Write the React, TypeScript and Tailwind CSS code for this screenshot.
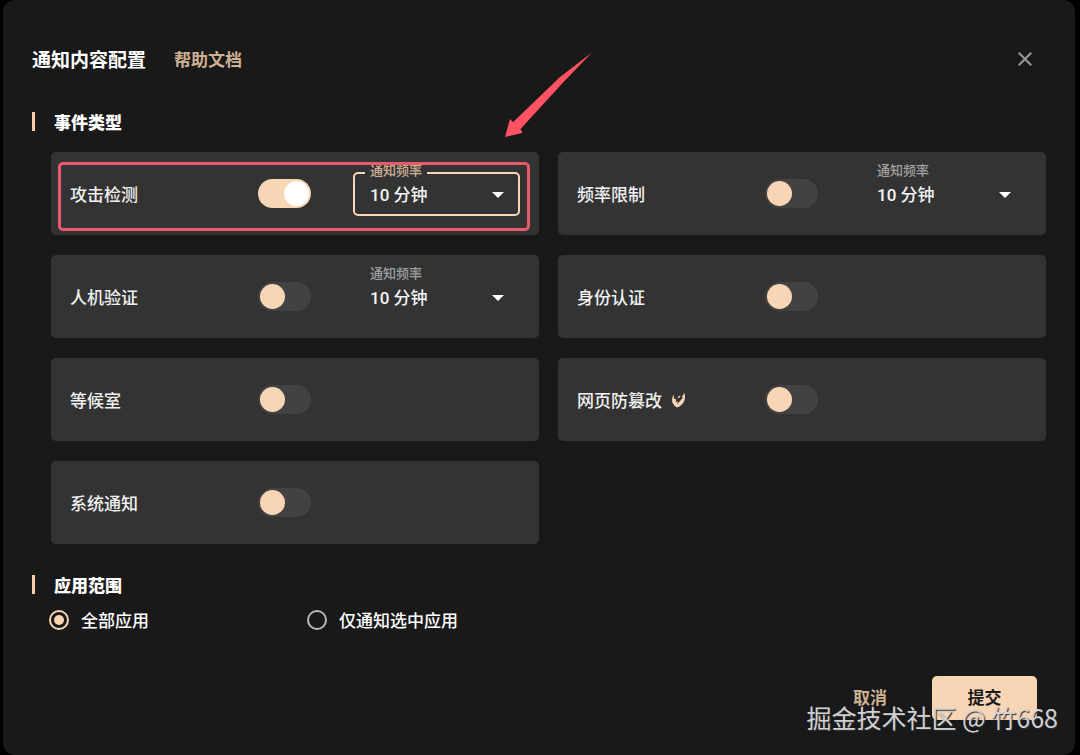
import { useState } from "react";
import { MdClose } from "react-icons/md";

type EventItem = {
  id: string;
  name: string;
  enabled: boolean;
  frequency?: boolean;
  premium?: boolean;
};

const EVENTS: EventItem[] = [
  { id: "attack", name: "攻击检测", enabled: true, frequency: true },
  { id: "rate", name: "频率限制", enabled: false, frequency: true },
  { id: "captcha", name: "人机验证", enabled: false, frequency: true },
  { id: "auth", name: "身份认证", enabled: false },
  { id: "waiting", name: "等候室", enabled: false },
  { id: "tamper", name: "网页防篡改", enabled: false, premium: true },
  { id: "system", name: "系统通知", enabled: false },
];

function PremiumIcon() {
  return (
    <svg className="h-4 w-4" viewBox="0 0 16 16" fill="#f8d5b4" aria-hidden="true">
      <path d="M3 2.4 C.8 4.6 .6 9 2 11.6 C2.8 13.4 4.4 15 6.2 15.4 C9.2 14.8 12 12 13.2 9 C14.4 6 14.4 3 12.8 .6 C12.8 2.4 12 3.8 10.8 4.8 L12 5.6 L6 12.6 L7 9.4 L4.6 10 L5.2 7.2 L3.6 7 C2.8 5.8 2.6 4.2 3 2.4 Z" />
      <path d="M6.4 5.4 L7.8 4.2 L9.6 3.6 L8.8 5.2 L7 6.2 Z" />
    </svg>
  );
}

function Switch({ id, defaultChecked }: { id: string; defaultChecked: boolean }) {
  return (
    <span className="relative flex shrink-0">
      <input id={id} type="checkbox" role="switch" defaultChecked={defaultChecked} className="peer h-[29px] w-[53px] cursor-pointer appearance-none rounded-full bg-[#424242] checked:bg-[#f8d5b4]" />
      <span className="pointer-events-none absolute top-[2px] left-[2px] h-[25px] w-[25px] rounded-full bg-[#f8d5b4] peer-checked:left-[26px] peer-checked:bg-white" />
    </span>
  );
}

function FrequencySelect({ id, active }: { id: string; active: boolean }) {
  return (
    <div className="relative ml-[42px] flex-1">
      <label htmlFor={id} className={`absolute -top-[10px] left-3 bg-[#333333] px-[5px] text-[13px] leading-4 font-medium ${active ? "text-[#cfb296]" : "text-[#a0a0a0]"}`}>
        通知频率
      </label>
      <select id={id} className={`block h-11 w-full appearance-none rounded-[5px] border-2 pt-1 pl-[15px] font-[Roboto,'Noto_Sans_CJK_SC',sans-serif] text-[17px] font-medium text-[#f4f4f4] outline-none ${active ? "border-[#f8d5b4]" : "border-transparent"}`}>
        <option>10 分钟</option>
      </select>
      <svg className="pointer-events-none absolute top-5 right-4 h-[6px] w-3" viewBox="0 0 12 6" fill="#fff" aria-hidden="true">
        <path d="M0 0h12L6 6z" />
      </svg>
    </div>
  );
}

function Annotation() {
  return (
    <>
      <div className="pointer-events-none absolute top-[10px] right-[9px] bottom-1 left-[7px] rounded-[5px] border-3 border-[#ea586b]" />
      <svg className="pointer-events-none absolute -top-[100px] left-[453px] h-[86px] w-[90px]" viewBox="0 0 90 86" fill="#ff5364" aria-hidden="true">
        <path d="M1 85 L6 67 L9 70.3 L56 25 L88 .5 L60 29.5 L16.5 77 L18.5 81 Z" />
      </svg>
    </>
  );
}

function EventCard({ item }: { item: EventItem }) {
  return (
    <div className="relative flex min-h-[83px] items-center rounded-[5px] bg-[#333333] px-[19px]">
      <label htmlFor={item.id} className="flex w-[188px] shrink-0 items-center gap-[9px] text-[17px] font-medium text-[#f0f0f0]">
        {item.name}
        {item.premium && <PremiumIcon />}
      </label>
      <Switch id={item.id} defaultChecked={item.enabled} />
      {item.frequency && <FrequencySelect id={`${item.id}-frequency`} active={item.enabled} />}
      {item.id === "attack" && <Annotation />}
    </div>
  );
}

function SectionTitle({ children }: { children: string }) {
  return (
    <h2 className="flex h-[19px] items-center gap-[19px] text-[17px] font-black text-white">
      <span className="h-[19px] w-[3px] bg-[#f8cda8]" />
      {children}
    </h2>
  );
}

export default function App() {
  const [scope, setScope] = useState("all");
  const scopes = [
    { value: "all", label: "全部应用" },
    { value: "selected", label: "仅通知选中应用" },
  ];

  return (
    <div className="flex min-h-screen bg-black pr-[5px] pl-[3px] font-['Noto_Sans_CJK_SC',sans-serif]">
      <form role="dialog" aria-labelledby="dialog-title" onSubmit={(e) => e.preventDefault()} className="relative flex-1 rounded-xl bg-[#191919] px-[29px] pt-10 pb-[35px]">
        <header className="flex h-[38px] items-center pr-[9px]">
          <h1 id="dialog-title" className="text-[19px] font-bold text-white">通知内容配置</h1>
          <a href="#help" className="ml-7 text-[17px] font-bold text-[#d0b092]">帮助文档</a>
          <button type="button" aria-label="关闭" className="ml-auto text-[#999999]">
            <MdClose className="h-6 w-6" />
          </button>
        </header>

        <section className="mt-[34px]">
          <SectionTitle>事件类型</SectionTitle>
          <div className="mt-[21px] ml-[19px] grid grid-cols-2 gap-x-[19px] gap-y-5">
            {EVENTS.map((item) => (
              <EventCard key={item.id} item={item} />
            ))}
          </div>
        </section>

        <section className="mt-[31px]">
          <SectionTitle>应用范围</SectionTitle>
          <div className="mt-[14px] ml-[17px] flex h-6 items-center">
            {scopes.map((s) => (
              <label key={s.value} className="flex min-w-[258px] items-center gap-3 text-[17px] font-medium text-white">
                <input type="radio" name="scope" value={s.value} checked={scope === s.value} onChange={() => setScope(s.value)} className="grid h-5 w-5 appearance-none place-items-center rounded-full border-2 border-[#b8b8b8] before:h-[10px] before:w-[10px] before:rounded-full checked:border-[#f8d5b4] checked:before:bg-[#f8d5b4]" />
                {s.label}
              </label>
            ))}
          </div>
        </section>

        <footer className="mt-11 flex justify-end gap-[9px] pr-[9px] text-[17px]">
          <button type="button" className="h-11 rounded-[5px] px-9 pb-[2px] font-bold text-[#d0b092]">取消</button>
          <button type="submit" className="h-11 w-[105px] rounded-[5px] bg-[#f8d5b4] pb-[2px] font-bold text-[#1a1a1a]">提交</button>
        </footer>

        <p className="pointer-events-none absolute right-[17px] bottom-5 text-[25px] leading-9 text-[#d2d2d2] [text-shadow:1px_1px_1px_#333]">
          掘金技术社区 @ 竹668
        </p>
      </form>
    </div>
  );
}
